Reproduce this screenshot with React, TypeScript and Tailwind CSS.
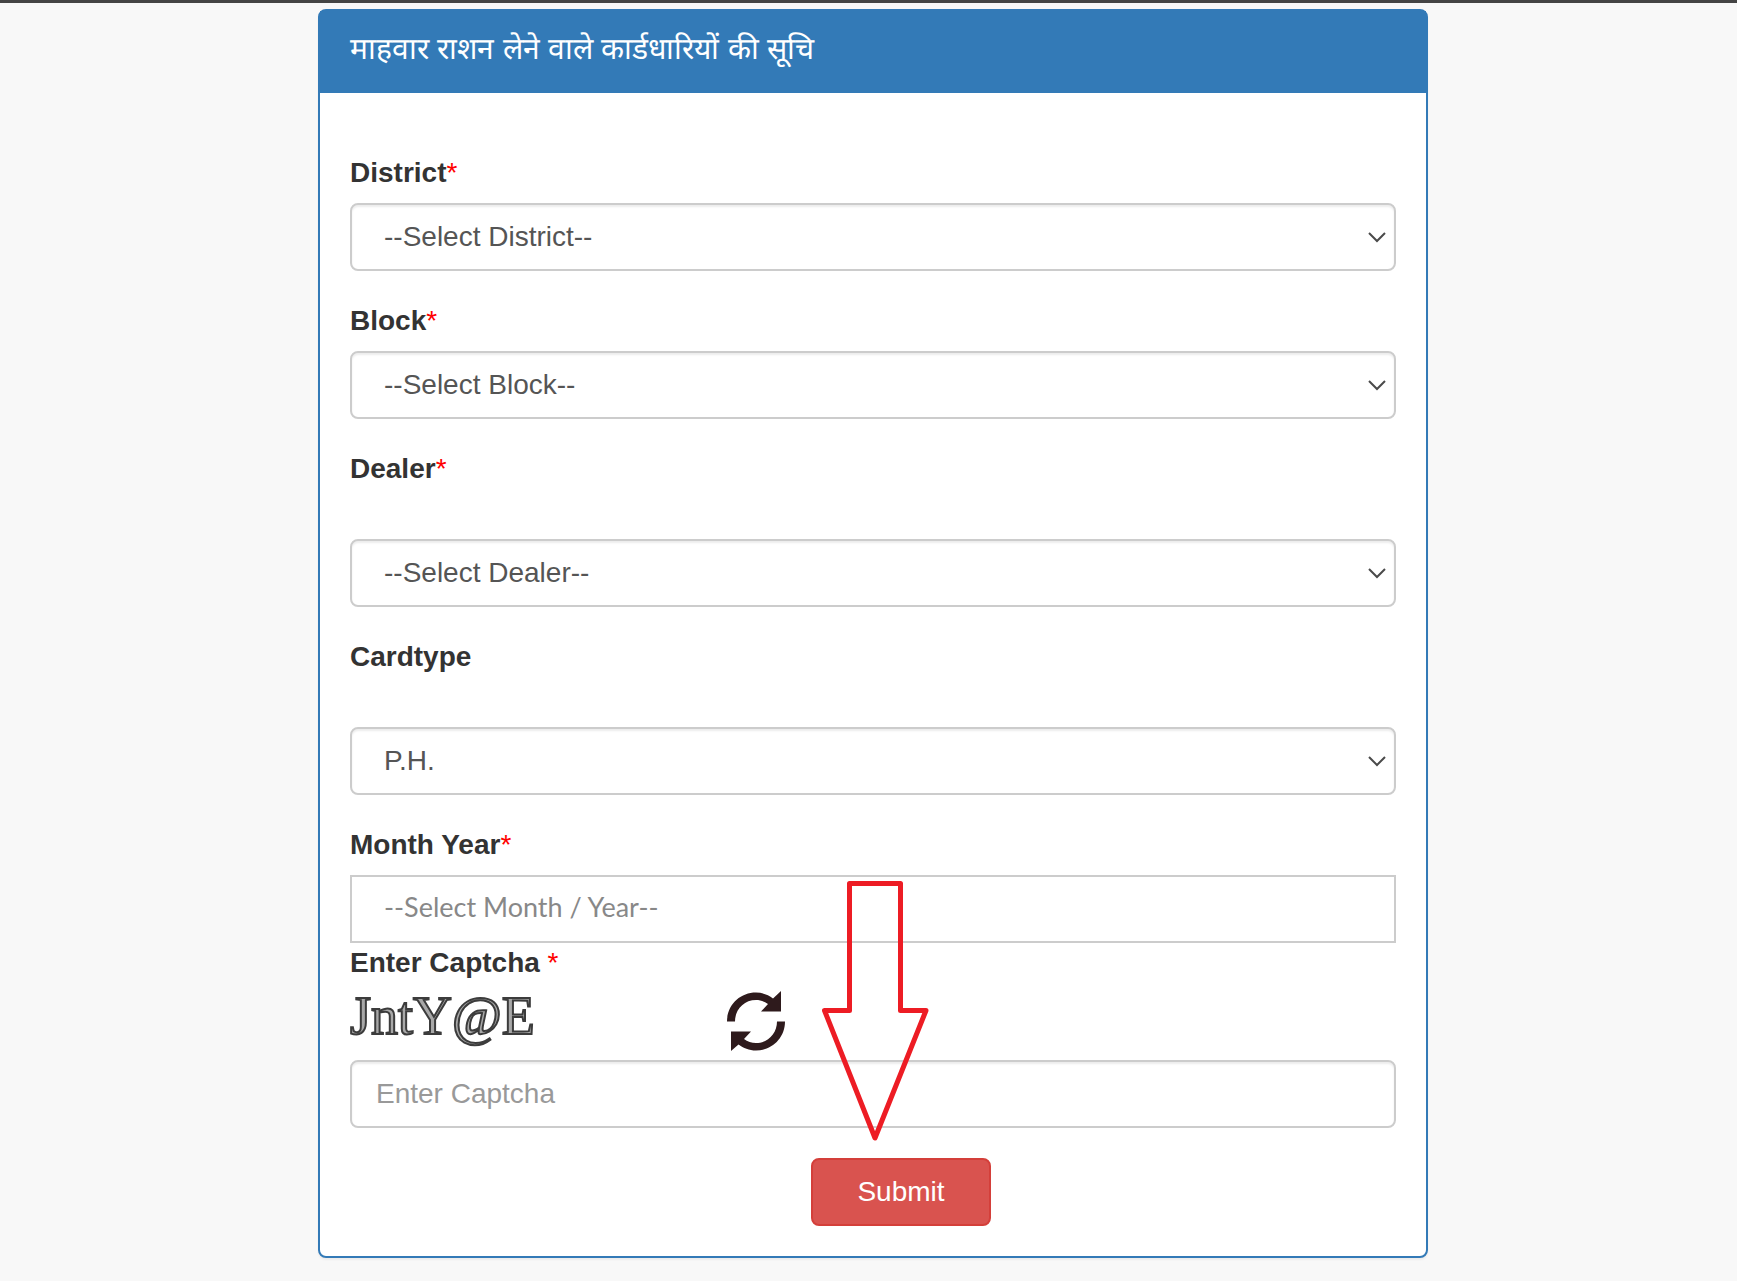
import React, { useState } from 'react';

interface SelectFieldProps {
  id: string;
  label: string;
  options: string[];
  required?: boolean;
  spaced?: boolean;
}

const Star = () => <span className="font-normal text-[#ff0000]">*</span>;

const SelectField: React.FC<SelectFieldProps> = ({ id, label, options, required, spaced }) => (
  <div className="mb-[30px]">
    <label htmlFor={id} className={`block font-bold leading-10 ${spaced ? 'mb-[50px]' : 'mb-[10px]'}`}>
      {label}
      {required && <Star />}
    </label>
    <div className="relative">
      <select
        id={id}
        className="block h-[68px] w-full appearance-none rounded-lg border-2 border-[#cccccc] bg-white px-8 text-[#555555] shadow-[inset_0_2px_2px_rgba(0,0,0,0.075)]"
      >
        {options.map(option => (
          <option key={option}>{option}</option>
        ))}
      </select>
      <svg
        className="pointer-events-none absolute right-[10px] top-7 h-3 w-[18px]"
        viewBox="0 0 18 12"
        fill="none"
        stroke="#4a4a4a"
        strokeWidth="2"
      >
        <path d="M1 2l8 8 8-8" />
      </svg>
    </div>
  </div>
);

const App: React.FC = () => {
  const [captcha, setCaptcha] = useState('');
  const [monthYear, setMonthYear] = useState('');

  return (
    <div className="min-h-screen border-t-[3px] border-[#444444] bg-[#f8f8f8] pb-[23px] pl-[9px] pt-[6px] font-['Liberation_Sans',Arial,sans-serif] text-[28px] leading-10 text-[#333333]">
      <main className="mx-auto w-full max-w-[1110px] rounded-lg border-2 border-[#337ab7] bg-white shadow-[0_2px_2px_rgba(0,0,0,0.05)]">
        <header className="bg-[#337ab7] px-[30px] pb-6 pt-[18px] text-white">
          <h1 className="text-[30px] leading-10">माहवार राशन लेने वाले कार्डधारियों की सूचि</h1>
        </header>

        <form className="px-[30px] pb-[30px] pt-[60px]" onSubmit={e => e.preventDefault()}>
          <SelectField id="district" label="District" options={['--Select District--']} required />
          <SelectField id="block" label="Block" options={['--Select Block--']} required />
          <SelectField id="dealer" label="Dealer" options={['--Select Dealer--']} required spaced />
          <SelectField id="cardtype" label="Cardtype" options={['P.H.']} spaced />

          <label htmlFor="month-year" className="mb-[10px] block font-bold leading-10">
            Month Year
            <Star />
          </label>
          <div className="relative">
            <input
              id="month-year"
              type="text"
              value={monthYear}
              onChange={e => setMonthYear(e.target.value)}
              placeholder="--Select Month / Year--"
              className="block h-[68px] w-full border-2 border-[#cccccc] bg-white px-8 pb-[6px] font-['Century_Gothic',Lato,sans-serif] text-[27px] text-[#555555] placeholder:text-[#888888]"
            />

            <label htmlFor="captcha" className="block font-bold leading-10">
              Enter Captcha <Star />
            </label>
            <div className="flex h-[77px] items-start">
              <span className="w-[376px] font-['Liberation_Serif',serif] text-[54px] leading-[66px] text-[#a8a8a8] [-webkit-text-stroke:2px_#3c3c3c]">
                JntY@E
              </span>
              <button type="button" aria-label="Refresh captcha" className="mt-2" onClick={() => setCaptcha('')}>
                <svg className="block h-[60px] w-[60px]" viewBox="0 0 60 60" fill="#2e1a1c">
                  <path d="M1 30.500C1 14 14 1.500 30 1.500c7 0 12.500 2.500 17 6L55 0v20.500H35l7-7.500c-3.500-2.500-7.500-4-12-4-12 0-21 9.500-21 21.500z" />
                  <path d="M59 30.500C59 47 46 59.500 30 59.500c-7 0-12.500-2.500-17.500-6L5 60V40.500h20l-7 7.500c3.500 2.500 7.500 4 12 4 12 0 21-9.500 21-21.500z" />
                </svg>
              </button>
            </div>
            <input
              id="captcha"
              type="text"
              value={captcha}
              onChange={e => setCaptcha(e.target.value)}
              placeholder="Enter Captcha"
              className="block h-[68px] w-full rounded-lg border-2 border-[#cccccc] bg-white px-6 text-[#555555] shadow-[inset_0_2px_2px_rgba(0,0,0,0.075)] placeholder:text-[#999999]"
            />

            {/* Arrow drawn over the form, pointing at the submit button */}
            <svg
              className="pointer-events-none absolute left-[472px] top-[6px] h-[260px] w-[108px]"
              viewBox="0 0 108 260"
              fill="none"
              stroke="#ed1c24"
              strokeWidth="5"
              strokeLinejoin="round"
            >
              <path d="M27.500 2.500h51v127H104L53 257 2.500 129.500h25z" />
            </svg>
          </div>

          <div className="flex justify-center pl-14 pt-[30px]">
            <button
              type="submit"
              className="h-[68px] w-[180px] rounded-lg border-2 border-[#d43f3a] bg-[#d9534f] text-white"
            >
              Submit
            </button>
          </div>
        </form>
      </main>
    </div>
  );
};

export default App;
